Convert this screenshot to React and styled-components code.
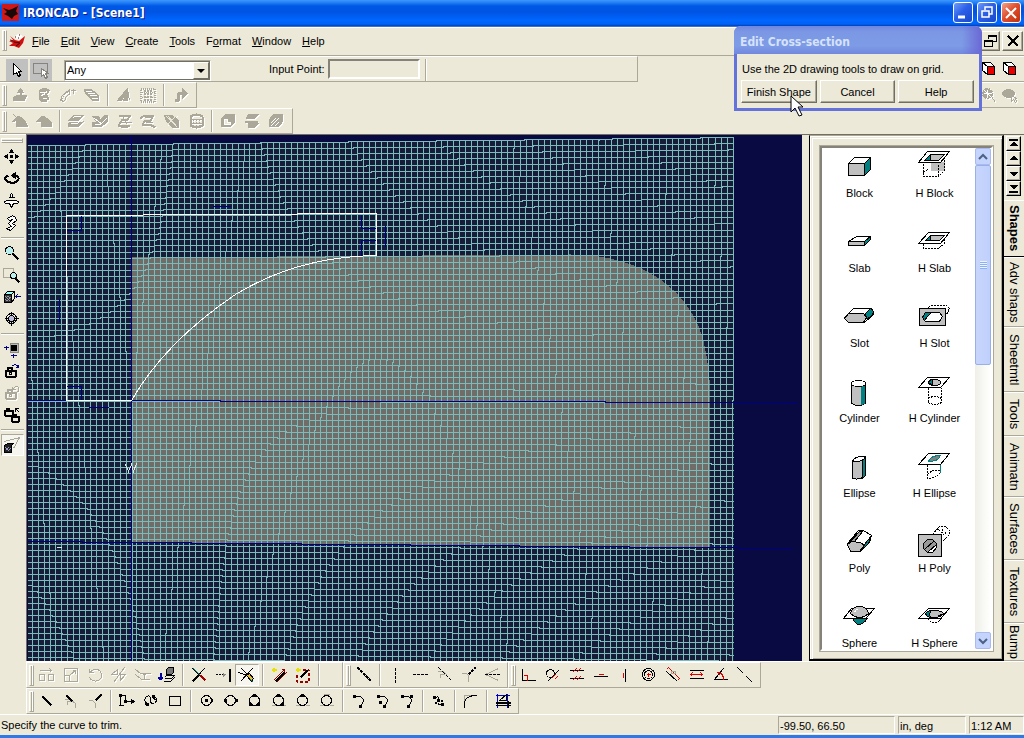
import React from "react";
import styled, { createGlobalStyle, css } from "styled-components";

const face = "#ece9d8";
const shade = "#aca899";
const dark = "#716f64";
const teal = "#008080";
const silver = "#c0c0c0";

const GlobalStyle = createGlobalStyle`
    * {
        box-sizing: border-box;
    }
    body {
        margin: 0;
        background: ${face};
        color: #000;
        font-family: "Liberation Sans", Arial, sans-serif;
        font-size: 11px;
        line-height: 14px;
    }
    button, input, select {
        font: inherit;
        color: inherit;
        margin: 0;
        padding: 0;
        border: 0;
        border-radius: 0;
        background: transparent;
    }
`

/* 18 x 18 toolbar glyphs */
const glyphs = {
    // feature toolbar
    extrude: <><path d="M2 11 5 9H15L13 14H2Z" fill="currentColor"/><path d="M9 10V3" strokeWidth="2"/><path d="M6 6 9 2 12 6Z" fill="currentColor"/></>,
    spin: <><path d="M4 4Q9 0 14 4L11 8Q14 11 12 14Q8 17 4 13Z" fill="currentColor"/><path d="M4 6H10L12 5M6 9 10 7M7 12H11" stroke="#fff"/></>,
    sweep: <><path d="M1 14Q2 7 10 4M5 15Q6 9 11 7M1 14 5 15M11 4H16M14 2V7M10 2V5" strokeWidth="1"/><path d="M2 14Q3 8 10 5" strokeWidth="2" strokeDasharray="1 1"/></>,
    loft: <><path d="M1 3H8L15 9V14H9L2 7Z" fill="currentColor"/><path d="M2 5H8M4 7H11M6 9H13M8 12H14" stroke="#fff"/></>,
    thicken: <><path d="M2 14 12 2V14H8L10 8 6 14Z" fill="currentColor"/><path d="M12 3 14 14"/></>,
    pattern: <><path d="M1 2H15V15H1Z" strokeDasharray="1 1" strokeWidth="2"/><path d="M5 3V14M8 3V14M11 3V14" strokeWidth="2" strokeDasharray="2 1"/><path d="M2 6H15M2 11H15" strokeDasharray="1 1"/></>,
    bend: <><path d="M3 14H7V7H13" strokeWidth="3"/><path d="M11 2 16 7 11 12Z" fill="currentColor"/></>,
    fillet: <><path d="M5 14V8L1 9 6 4Q12 4 16 14Z" fill="currentColor"/><path d="M2 2 15 14"/></>,
    chamfer: <path d="M1 9 6 4H9L16 10V14H6V9Z" fill="currentColor"/>,
    shell: <><path d="M1 8 6 3H16L11 8ZM1 10V14H11L16 9" fill="currentColor"/><path d="M5 6 7 4H13M3 11H10L14 7" stroke="#fff"/></>,
    draft: <><path d="M1 4H7L9 8 13 3H16V9L10 14H1V10H6Z" fill="currentColor"/><path d="M3 6 11 12M8 13 15 6M3 12H8" stroke="#fff"/></>,
    move: <><path d="M3 3H15L12 7H7L3 13H14" strokeWidth="2"/><path d="M4 10H16M7 4 12 12M5 15H12"/></>,
    offset: <><path d="M1 6 5 3H14L11 8H6L3 12H10L16 15" strokeWidth="2"/><path d="M5 5H12M6 10H13"/></>,
    deleteface: <><path d="M1 3H9L15 8V15H9L3 9Z" fill="currentColor"/><path d="M3 13 13 3M5 4 13 14M3 4 14 15" stroke={face}/></>,
    cyl: <><path d="M3 4Q9 0 15 4V13Q9 17 3 13Z" strokeWidth="2"/><path d="M6 6V15M9 6V16M12 6V15M3 7H15M3 11H15" strokeDasharray="2 1"/></>,
    split: <><path d="M2 6 6 2H15V10L11 14H2Z" fill="currentColor"/><path d="M5 7H8V10H11V12H5Z" fill={face} stroke="#fff"/></>,
    mirror: <><path d="M5 2H15L11 6H3ZM5 11H15L11 15H5Z" fill="currentColor"/><path d="M1 9H14" strokeWidth="2"/></>,
    hatch: <><path d="M2 7 6 2H15V9L11 14H2Z" fill="currentColor"/><path d="M3 11 8 6M3 14 11 6M7 14 11 10" stroke="#fff"/></>,
    // left toolbar
    pan: <path d="M8 1 10 4H6ZM8 15 10 12H6ZM1 8 4 6V10ZM15 8 12 6V10ZM7 7H9V9H7Z" fill="#000"/>,
    orbit: <><path d="M5 5Q1 6 2 9Q5 13 11 12Q16 10 15 7Q14 5 11 5" strokeWidth="2"/><path d="M12 2V8L8 5Z" fill="#000"/></>,
    lookat: <><path d="M7 5V2L8 1 9 2V5M5 5H11M4 8H12Q17 9 14 11H10L8 15 6 11H2Q-1 9 4 8Z" fill="#fff"/></>,
    walk: <path d="M4 4 9 1 12 3 13 6 9 9 12 11 7 16 3 14 8 12 5 9 9 5 6 6Z" fill="#fff"/>,
    zoom: <><circle cx="6" cy="6" r="4" fill="#b9eeee"/><path d="M9 9 15 15" strokeWidth="2"/></>,
    zoomwin: <><path d="M0 2H10V11H0Z" stroke={shade}/><circle cx="10" cy="9" r="3" fill="#b9eeee"/><path d="M12 12 16 16" strokeWidth="2"/></>,
    fit: <><path d="M1 6H8V14H1Z" fill="#333"/><path d="M8 14 11 10V3L8 6"/><path d="M1 6 4 3H11L8 6Z" fill="#9ff"/><path d="M2 8 7 13M2 11 4 13M5 8 7 10M2 10 4 8M3 13 7 9" stroke="#99a"/><path d="M12 8H17M14 6 12 8 14 10" stroke="#000080"/></>,
    center: <><circle cx="8" cy="8" r="5"/><path d="M8 1V15M1 8H15"/><circle cx="8" cy="8" r="3" fill="#bbd"/></>,
    front: <><path d="M7 3H15V12H7Z" fill="#bbb" stroke="#888"/><path d="M8 5H13V10H8Z" fill="#000"/><path d="M0 7H5M3 5V9M7 15H13M10 13V17" stroke="#000080"/></>,
    camera: <><path d="M2 8H12V14H2ZM4 8V5H8V8" strokeWidth="2"/><circle cx="7" cy="11" r="1"/><path d="M8 4Q12 0 15 5M12 5H15V2" stroke="#000080"/></>,
    cameraoff: <><path d="M2 8H12V14H2ZM4 8V5H8V8" strokeWidth="2"/><circle cx="7" cy="11" r="1"/><path d="M9 5Q13 0 15 3Q16 7 13 8M9 2V5H12"/></>,
    cameras: <><path d="M1 4H9V9H1ZM3 4V2H5V4M8 10H15V15H8ZM10 10V8H12V10" strokeWidth="2"/><path d="M12 2H15M12 2V5M12 2 16 6"/></>,
    perspective: <><path d="M1 5 16 1 10 12" stroke={shade}/><path d="M1 9 4 7H10L8 9V16H1Z" fill="#222"/><path d="M2 11 6 15M2 14 5 11M5 14 7 12" stroke="#99c"/></>,
    // top-left selection
    arrow: <path d="M5 2V13L8 11 10 15 12 14 10 10H13Z" fill="#fff"/>,
    boxsel: <><path d="M1 2H15V12H1Z" stroke="#85837b"/><path d="M9 7V15L11 13 13 17 15 16 13 12H16Z" fill="#fff" stroke="#85837b"/></>,
    // 2D editing
    move2d: <><path d="M1 8H6V14H1ZM10 8H15V14H10ZM1 4H13M11 2 13 4 11 6"/></>,
    scale2d: <path d="M2 2H15V15H2ZM2 9H7V15M8 8 13 4M10 4H13V7"/>,
    rotate2d: <path d="M3 2V6H7M3 6Q9 0 14 5Q17 11 12 14Q6 16 3 11"/>,
    mirror2d: <path d="M1 8 7 3V8ZM10 8H15L10 14ZM3 16 14 1"/>,
    offset2d: <path d="M1 3 6 7H9M1 8 7 13H15M7 7H16M10 7V13M8 9 10 7 12 9"/>,
    project: <><path d="M8 3 10 1H15V6L13 8H8Z" fill="#777"/><path d="M6 11 8 9H16L13 12H6M5 15H12L16 11" fill={face}/><path d="M2 6V13M0 11 2 13 4 11" stroke="#0000a0" strokeWidth="2"/></>,
    trim: <><path d="M2 2 15 15M14 2 2 15"/><path d="M3 2 10 9" stroke={teal}/><path d="M2 15 8 9" strokeWidth="2"/><path d="M10 9 15 14" stroke="#a00000" strokeWidth="2"/></>,
    extend: <><path d="M1 8H9" strokeDasharray="2 1"/><path d="M8 6 11 8 8 11Z" fill="#888" stroke="none"/><path d="M15 2V15" strokeWidth="2"/></>,
    power: <><path d="M3 2 13 12M2 15 14 2M0 6 9 9"/><path d="M8 9 11 7 15 12 13 15Z" fill="#e8c030"/><path d="M12 13 15 16" stroke={teal}/></>,
    dim: <><path d="M3 14 13 4M6 16 16 6M11 3H14V6" stroke="#900000"/><path d="M5 15 14 6" strokeWidth="2"/><path d="M1 3H6M3 1V5" stroke="#e8e000" strokeWidth="2"/></>,
    constraint: <><path d="M2 8V15H14V3M8 3H14" stroke="#900000" strokeDasharray="3 2" strokeWidth="2"/><path d="M6 11 13 4" strokeWidth="2"/><path d="M1 3H6M3 1V5" stroke="#e8e000" strokeWidth="2"/></>,
    // construction lines
    conline: <path d="M2 1 16 15" strokeDasharray="3 1" strokeWidth="2"/>,
    vline: <path d="M8 1V16" strokeDasharray="3 1"/>,
    hline: <path d="M1 8H17" strokeDasharray="3 1"/>,
    tangent: <><path d="M2 5H8L12 9M5 11V8H9" stroke={shade}/><path d="M3 1 16 14" strokeDasharray="4 1"/></>,
    normal: <><path d="M2 7H7L9 9V15" stroke={shade}/><path d="M9 8 16 1" strokeDasharray="3 1" strokeWidth="2"/></>,
    bisect: <><path d="M15 2 2 8 15 14" stroke={shade}/><path d="M1 8H17" strokeDasharray="3 1"/></>,
    // constraints
    perp: <><path d="M2 2V14H15"/><path d="M3 9H7V14" stroke="#e00000"/></>,
    tanc: <><circle cx="6" cy="7" r="4"/><path d="M3 15 14 4"/><path d="M7 12 11 8M10 13 13 10" stroke="#e00000"/></>,
    parallel: <><path d="M1 4H15M1 12H15"/><path d="M4 6 8 2M8 6 12 2M4 14 8 10M8 14 12 10" stroke="#e00000"/></>,
    horiz: <><path d="M1 10H15"/><path d="M6 8H11" stroke="#e00000"/></>,
    vert: <><path d="M9 2V15"/><path d="M7 6V11" stroke="#e00000"/></>,
    conc: <><circle cx="8" cy="8" r="6"/><circle cx="8" cy="8" r="4"/><path d="M6 8H10M8 6V10" stroke="#e00000"/></>,
    equal: <><path d="M2 5 13 15"/><path d="M2 3 4 1 15 12 13 14" stroke="#e00000"/><path d="M7 5H11V7H7Z" stroke={shade}/></>,
    length: <><path d="M1 4H15M1 12H15"/><path d="M2 8H14M4 6 2 8 4 10M12 6 14 8 12 10" stroke="#e00000"/></>,
    angle: <><path d="M11 2 2 13H15"/><path d="M6 6Q11 7 11 13M5 6 8 9" stroke="#e00000"/></>,
    colin: <path d="M1 1 7 7M10 10 16 16"/>,
    // 2D drawing
    line: <path d="M4 4 13 13" strokeWidth="2"/>,
    linetan: <><path d="M2 7H8L13 11V15M5 12V9H8" stroke={shade}/><path d="M4 3 10 9" strokeWidth="2"/></>,
    linenorm: <><path d="M2 8H6L9 11V15" stroke={shade}/><path d="M9 8 15 2" strokeWidth="2"/></>,
    poly: <><path d="M2 3V13M0 13H5M2 3H7V9H15"/><path d="M1 2H3V4H1ZM6 8H8V10H6ZM13 7 16 9 13 11Z" fill="#000"/></>,
    spline: <><path d="M5 11Q0 8 4 4Q8 2 8 7Q8 13 12 11Q16 7 12 4"/><path d="M3 9Q2 13 6 12M9 5Q12 5 13 8"/><path d="M4 11H6V13H4ZM10 3H12V5H10Z" fill="#000"/></>,
    rect: <path d="M3 4H14V13H3Z"/>,
    circle1: <><circle cx="8" cy="8" r="5"/><path d="M7 7H9V9H7ZM13 7H14V9H13Z" fill="#000"/></>,
    circle2: <><circle cx="8" cy="8" r="5"/><path d="M2 7H4V9H2ZM13 7H15V9H13Z" fill="#000"/></>,
    circle3: <><circle cx="8" cy="8" r="5"/><path d="M7 2H9V4H7ZM3 11H5V13H3ZM11 11H13V13H11Z" fill="#000"/></>,
    circle4: <><path d="M1 13H15" stroke={shade}/><circle cx="8" cy="8" r="5"/><path d="M7 2H9V4H7ZM11 11H13V13H11Z" fill="#000"/></>,
    circle5: <><path d="M1 13H5M11 13H15" stroke={shade}/><circle cx="8" cy="8" r="5"/><path d="M7 2H9V4H7Z" fill="#000"/></>,
    circle6: <><path d="M1 13H5M11 13H15M5 2H11" stroke={shade}/><circle cx="8" cy="8" r="5"/></>,
    arc1: <><path d="M4 4Q13 3 13 9L10 14"/><path d="M3 3H5V5H3ZM9 13H11V15H9Z" fill="#000"/></>,
    arc2: <><path d="M4 4Q13 3 13 9L10 14"/><path d="M3 3H5V5H3ZM9 13H11V15H9ZM5 9H7V11H5Z" fill="#000"/></>,
    arc3: <><path d="M4 4Q13 3 13 9L10 14"/><path d="M3 3H5V5H3ZM9 13H11V15H9ZM12 3H14V5H12Z" fill="#000"/></>,
    bspline: <><path d="M4 5Q10 3 8 8Q6 13 12 12"/><path d="M3 4H5V6H3ZM7 7H9V9H7ZM11 11H13V13H11ZM5 10H6V11H5ZM11 8H12V9H11Z" fill="#000"/></>,
    round: <><path d="M2 15V3H14" stroke={shade}/><path d="M2 15V10Q3 3 14 3"/></>,
    project2: <><path d="M1 3H15M3 1V15M13 1V15" stroke="#0000d0"/><path d="M5 8 12 2V8Z"/><path d="M1 10H16" strokeWidth="2"/><path d="M1 13H16M14 8V15"/></>,
    // scene toolbar, right edge
    cube: <><path d="M2 2H10L14 6V14H7L2 10Z" fill="#fff"/><path d="M7 6H14V14H7Z" fill="#e80000"/><path d="M2 2 7 6"/></>,
    render: <><circle cx="7" cy="7" r="5" fill="currentColor" strokeDasharray="2 1"/><path d="M7 3V11M3 7H11M4 4 10 10M10 10 15 15" stroke="#fff"/><path d="M11 10 15 16"/></>,
    pick: <><ellipse cx="7" cy="7" rx="6" ry="4" fill="currentColor"/><path d="M10 9V15L12 13 14 16 15 15 14 12H15Z"/></>,
};

const Svg = styled.svg`
    display: block;
    width: 18px;
    height: 18px;
    color: ${(p) => (p.$off ? shade : "#000")};
    fill: none;
    stroke: currentColor;
    stroke-linejoin: bevel;
    shape-rendering: crispEdges;
    filter: ${(p) => (p.$off ? "drop-shadow(1px 1px 0 #fff)" : "none")};
`

const Glyph = ({ name, off }) => (
    <Svg viewBox="0 0 18 18" $off={off} aria-hidden="true">
        <g transform="translate(0.5 0.5)">{glyphs[name]}</g>
    </Svg>
);

const Page = styled.div`
    display: flex;
    flex-direction: column;
    height: 100vh;
    overflow: hidden;
    border-bottom: 3px solid #2f78e8;
`

const TitleBar = styled.header`
    display: flex;
    align-items: center;
    flex: none;
    height: 27px;
    padding: 0 3px 2px 2px;
    gap: 4px;
    background: linear-gradient(#3f96fb 0, #2a86f8 2px, #0058e6 6px, #0054e3 12px, #0066ff 20px, #0062f6 24px, #003fbb 26px, #8da2c4 27px);
    h1 {
        flex: 1;
        margin: 0;
        color: #fff;
        font-family: "DejaVu Sans Condensed", "DejaVu Sans", sans-serif;
        font-size: 12px;
        text-shadow: 1px 1px 0 #0a1883;
    }
`

const CaptionButton = styled.button`
    width: 20px;
    height: 21px;
    border: 1px solid #fff;
    border-radius: 3px;
    background: ${(p) => (p.$close ? "linear-gradient(135deg, #f0a48c, #e05030 45%, #c03008)" : "linear-gradient(135deg, #6f9cf8, #2c60e8 45%, #1848c8)")};
    svg {
        display: block;
        width: 18px;
        height: 19px;
        fill: none;
        stroke: #fff;
    }
`

const Logo = styled.svg`
    display: block;
    width: 17px;
    height: 17px;
`

const MenuBar = styled.nav`
    display: flex;
    align-items: center;
    flex: none;
    gap: 1px;
    height: 29px;
    padding: 0 0 2px 2px;
    border-top: 1px solid #fff;
    border-bottom: 1px solid ${shade};
    ${Logo} {
        margin: 0 0 0 1px;
    }
`

const MenuButton = styled.button`
    height: 20px;
    padding: 0 5px;
`

const Grip = styled.span`
    flex: none;
    width: ${(p) => (p.$flat ? "22px" : "5px")};
    height: ${(p) => (p.$flat ? "5px" : "21px")};
    border: 1px solid;
    border-color: #fff ${shade} ${shade} #fff;
    ${(p) => p.$flat ? css`background: linear-gradient(${face} 1px, ${shade} 1px, ${shade} 2px, #fff 2px);` : css`background: linear-gradient(90deg, ${face} 1px, ${shade} 1px, ${shade} 2px, #fff 2px);`}
`

const Spacer = styled.div`
    flex: 1;
`

const MdiButton = styled.button`
    width: 21px;
    height: 20px;
    margin-right: 1px;
    border: 1px solid;
    border-color: #fff ${dark} ${dark} #fff;
    box-shadow: inset -1px -1px 0 ${shade};
    svg {
        display: block;
        margin: 0 auto;
        shape-rendering: crispEdges;
    }
`

const Row = styled.div`
    display: flex;
    flex: none;
    height: 26px;
`

const Bar = styled.div`
    display: flex;
    align-items: center;
    padding: 0 4px 0 2px;
    border-top: 1px solid #fff;
    border-right: 1px solid ${shade};
    border-bottom: 1px solid ${shade};
    ${Grip} {
        margin-right: 1px;
    }
`

const BottomBar = styled(Bar)`
    padding: 0 3px 0 2px;
    border-left: 1px solid #fff;
`

const ToolButton = styled.button`
    display: flex;
    align-items: center;
    justify-content: center;
    flex: none;
    width: 24px;
    height: 22px;
    ${(p) => p.$on && css`
        border: 1px solid;
        border-color: ${shade} #fff #fff ${shade};
        background: #f6f5ee;
    `}
`

const Divider = styled.span`
    flex: none;
    width: 2px;
    height: 22px;
    margin: 0 3px;
    border-left: 1px solid ${shade};
    border-right: 1px solid #fff;
`

const Blank = styled.span`
    flex: none;
    width: 16px;
`

const tools = (names, off = [], on) => names.split(" ").map((n, i) =>
    n === "|" ? <Divider key={i} /> : (
        <ToolButton key={i} aria-label={n} $on={n === on}>
            <Glyph name={n} off={off === true || off.includes(n)} />
        </ToolButton>
    )
);

const SelectionBar = styled(Bar)`
    flex: 0 1 638px;
    padding: 2px 0 0 6px;
`

const SelectButton = styled(ToolButton)`
    width: 22px;
    margin-right: 2px;
    background: ${silver};
`

const Combo = styled.span`
    position: relative;
    width: 147px;
    height: 21px;
    margin-left: 10px;
    border: 1px solid;
    border-color: ${shade} #fff #fff ${shade};
    select {
        appearance: none;
        width: 100%;
        height: 100%;
        padding-left: 1px;
        border: 1px solid ${dark};
        background: #fff;
    }
    svg {
        position: absolute;
        top: 1px;
        right: 1px;
        width: 16px;
        height: 17px;
        background: ${face};
        border: 1px solid;
        border-color: #fff ${dark} ${dark} #fff;
        pointer-events: none;
    }
`

const PointLabel = styled.label`
    display: flex;
    align-items: center;
    gap: 3px;
    margin: 0 2px 2px 58px;
    input {
        width: 92px;
        height: 20px;
        border: 2px solid;
        border-color: #85827a #fff #fff #85827a;
    }
`

const RightBar = styled(Bar)`
    width: 60px;
    padding: 0 4px 0 14px;
    border-right: 0;
    ${ToolButton} {
        width: 21px;
    }
`

const Middle = styled.div`
    display: flex;
    flex: 1;
    min-height: 0;
`

const SideBar = styled.aside`
    display: flex;
    flex-direction: column;
    align-items: center;
    flex: none;
    width: 26px;
    padding: 3px 2px 0 0;
    border-top: 1px solid #fff;
    ${Grip} {
        margin-bottom: 3px;
    }
    ${ToolButton} {
        width: 23px;
        height: 22px;
    }
    ${Divider} {
        width: 23px;
        height: 2px;
        margin: 3px 0;
        border: 0;
        border-top: 1px solid ${shade};
        border-bottom: 1px solid #fff;
    }
`

const Work = styled.div`
    display: flex;
    flex-direction: column;
    flex: 1;
    min-width: 0;
`

const Stage = styled.div`
    display: flex;
    flex: 1;
    min-height: 0;
    border-top: 1px solid ${dark};
    border-bottom: 1px solid #fff;
`

const Scene = styled.main`
    display: flex;
    flex: 1;
    min-width: 0;
    overflow: hidden;
    border-left: 1px solid ${dark};
    background: #0a0a42;
    svg {
        flex: 1;
        min-width: 0;
        display: block;
        height: 100%;
        fill: none;
        shape-rendering: crispEdges;
    }
`

const gridRight = 706;
const gridBottom = 527;

const columnX = (n) => 104 + 5.9 * n + 0.0012 * n * n;
const rowLeft = (n) => 266 + 5.95 * n;
const rowRight = (n) => 267 + 6.16 * n;

// nearly straight line broken into whole-pixel runs, the way the modeller rasterises it
const stairs = (from, to, a, b, upright) => {
    let level = Math.round(a);
    let d = upright ? `M${level} ${from}` : `M${from} ${level}`;
    for (let t = from; t <= to; t++) {
        const next = Math.round(a + ((b - a) * (t - from)) / (to - from));
        if (next !== level) {
            d += upright ? `V${t}H${next}` : `H${t}V${next}`;
            level = next;
        }
    }
    return d + (upright ? `V${to}` : `H${to}`);
};

const columns = Array.from({ length: 118 }, (_, i) => i - 17).map((n) => {
    const x = columnX(n);
    return stairs(Math.round(10 - x * 0.0113), gridBottom, x, x - (n > 0 ? 1 : -1), true);
});
const rows = Array.from({ length: 87 }, (_, i) => i - 43).map((n) => stairs(0, gridRight, rowLeft(n), rowRight(n)));

const Drawing = () => (
    <svg role="img" aria-label="Cross-section grid">
        <g transform="translate(0.5 0.5)">
            <path d="M0 10 706 2V527H0Z" fill="#171c38" />
            <path d="M104 122 540 119C620 118 680 160 682 244V412L104 407Z" fill="#706d68" />
            <path d="M633 135Q676 168 682 240" stroke="#171a38" />
            <path d={columns.join("")} stroke="#7abcbc" />
            <path d={rows.join("")} stroke="#7abcbc" />
            <g stroke="#000084">
                <path d="M104 0V527" />
                <path d={stairs(0, 770, 265, 267)} />
                <path d={stairs(0, 765, 406, 413)} />
                <path d="M54 80V95H39M39 251H54V265M32 163V186M61 272H81M334 79V93H350M350 105H334V120M358 90V111M185 71H203" />
            </g>
            <path d="M39 80 349 78V120Q270 121 208 159Q138 206 104 265H39Z" stroke="#fff" />
            <path d="M98 329 101 336 104 329 106 336 109 328M29 412H34" stroke="#d8e8e8" />
        </g>
    </svg>
);

const Catalog = styled.section`
    display: flex;
    flex: none;
    width: 222px;
    border-left: 7px solid ${face};
`

const CatalogFrame = styled.div`
    flex: 1;
    min-width: 0;
    display: flex;
    padding: 10px 9px 8px 10px;
    border: solid #000;
    border-width: 1px 2px 2px 1px;
    border-top-color: ${shade};
    box-shadow: inset 1px 1px 0 #fff, inset 2px 2px 0 ${face}, inset 3px 3px 0 #fff, inset -1px -1px 0 ${shade};
`

const ShapeList = styled.div`
    display: flex;
    flex: 1;
    min-width: 0;
    overflow: hidden;
    border: 2px solid;
    border-color: #85827a #fff #fff #85827a;
    outline: 1px solid ${shade};
    background: #fff;
`

const ShapeGrid = styled.ul`
    display: grid;
    grid-template-columns: 75px 75px;
    grid-auto-rows: 75px;
    flex: 1;
    margin: 0;
    padding: 2px 0 0;
    list-style: none;
`

const ShapeButton = styled.button`
    display: flex;
    flex-direction: column;
    align-items: center;
    gap: 4px;
    width: 75px;
    svg {
        display: block;
        width: 33px;
        height: 32px;
        fill: none;
        stroke: #000;
        shape-rendering: crispEdges;
    }
`

const shapes = [
    ["Block", <><path d="M5 13H21V25H5Z" fill={silver} /><path d="M5 13 11 7H27L21 13Z" fill="#fff" /><path d="M21 13 27 7V19L21 25Z" fill={teal} /></>],
    ["H Block", <><path d="M12 11H26V20H12Z" fill={silver} stroke="none" /><path d="M5 13V26H20L26 20V6M5 22 11 18M20 14V26" strokeDasharray="2 1" /><path d="M0 12 9 1H31L22 12Z" fill="#fff" /><path d="M6 10 12 4H26L20 10Z" fill={silver} /><path d="M6 10 12 4V10Z" fill={teal} /></>],
    ["Slab", <><path d="M5 16 13 11H27L21 16Z" fill="#fff" /><path d="M5 16H21V20H5Z" fill={silver} /><path d="M21 16 27 11V14L21 20Z" fill={teal} /></>],
    ["H Slab", <><path d="M5 18V23H20L26 18V12" strokeDasharray="2 1" /><path d="M0 18 10 7H31L22 18Z" fill="#fff" /><path d="M7 15 12 10H26L21 15Z" fill={silver} /><path d="M7 15 12 10V15Z" fill={teal} /></>],
    ["Slot", <><path d="M5 13 10 8H28L30 11V14L21 22H5L1 17Z" fill="#fff" /><path d="M5 13H20L23 17 20 22H5L1 18Z" fill={silver} /><path d="M22 13 27 8 30 11 28 16 23 18Z" fill={teal} /></>],
    ["H Slot", <><path d="M10 7 13 5H28L31 8 28 14" strokeDasharray="2 1" /><path d="M1 8H27V25H1Z" fill={silver} /><path d="M7 12H21L24 16 21 21H7L4 17Z" fill="#fff" /><path d="M7 12H13L9 16 6 20 4 17Z" fill={teal} /></>],
    ["Cylinder", <><path d="M8 8V28Q15 32 22 28V8Z" fill={silver} /><path d="M17 10H21V28L17 30Z" fill={teal} stroke="none" /><ellipse cx="15" cy="8" rx="7" ry="3" fill="#fff" /><path d="M22 8V28" /></>],
    ["H Cylinder", <><path d="M10 12V27Q16 31 23 27V12M10 23Q16 19 23 23" strokeDasharray="2 1" /><path d="M0 12 9 2H31L22 12Z" fill="#fff" /><ellipse cx="16" cy="7" rx="6" ry="3" fill={silver} /><path d="M10 7Q11 4 14 4V10Z" fill={teal} /></>],
    ["Ellipse", <><path d="M9 11V28Q16 30 22 25V6Z" fill={silver} /><path d="M19 9 22 6V25L19 28Z" fill={teal} /><path d="M9 11Q11 5 22 6Q20 12 9 11Z" fill="#fff" /></>],
    ["H Ellipse", <><path d="M9 14V28Q18 28 22 22V14M9 24Q15 18 22 20" strokeDasharray="2 1" /><path d="M22 14V22" stroke={teal} /><path d="M0 14 10 3H31L22 14Z" fill="#fff" /><path d="M10 11Q12 5 22 5Q20 11 10 11Z" fill="#808080" stroke={teal} /></>],
    ["Poly", <><path d="M4 18 15 5 20 5 28 10 26 17 17 26H7Z" fill="#fff" /><path d="M6 17 16 6 20 5 11 16Z" fill="#999" /><path d="M4 19 8 16 17 17 21 20 16 26H7Z" fill={silver} /><path d="M21 19 28 10 25 18 18 25Z" fill={teal} /></>],
    ["H Poly", <><path d="M14 9 21 1H27L31 5V9L24 16M20 4 26 10M24 3V7M27 6V9" strokeDasharray="2 1" /><path d="M0 9H23V31H0Z" fill={silver} /><path d="M9 14H14L18 18V22L14 27H9L5 23V18Z" fill="#999" /><path d="M6 24 16 15M9 27 18 19V22L14 27Z" fill="#fff" /></>],
    ["Sphere", <><path d="M9 18Q15 30 24 18Z" fill={teal} /><path d="M0 18 8 8H31L22 18Z" fill="#fff" /><path d="M7 13Q9 6 16 6T25 13Q16 21 7 13Z" fill={silver} /><path d="M11 12Q12 9 15 8" stroke="#fff" /></>],
    ["H Sphere", <><path d="M9 18Q16 26 23 18" strokeDasharray="2 1" /><path d="M0 18 10 8H31L22 18Z" fill="#fff" /><path d="M7 13Q9 10 16 10T25 13Q22 17 16 17T7 13Z" fill={silver} /><path d="M7 13Q9 10 13 10Q10 13 12 17Q8 16 7 13ZM20 15 24 14" fill={teal} /></>],
];

const ScrollTrack = styled.div`
    display: flex;
    flex-direction: column;
    flex: none;
    width: 16px;
    background: linear-gradient(90deg, #f0f0e8, #fff);
`

const ScrollButton = styled.button`
    flex: none;
    height: 17px;
    border: 1px solid #a8baf0;
    border-radius: 2px;
    background: #c4d4fc;
    svg {
        display: block;
        margin: 0 auto;
        fill: none;
        stroke: #4d6185;
        stroke-width: 2;
    }
`

const ScrollThumb = styled.div`
    display: flex;
    align-items: center;
    justify-content: center;
    flex: 0 0 40%;
    border: 1px solid #98b0e8;
    border-radius: 2px;
    background: linear-gradient(90deg, #c8d6fb, #bfd0fd);
    &::after {
        content: "";
        width: 7px;
        height: 8px;
        background: repeating-linear-gradient(#eef4fe 0, #eef4fe 1px, #8cb0f8 1px, #8cb0f8 2px);
    }
`

const TabColumn = styled.div`
    display: flex;
    flex-direction: column;
    flex: none;
    width: 20px;
    overflow: hidden;
    padding-top: 1px;
`

const TabNav = styled.button`
    flex: none;
    width: 15px;
    height: 15px;
    margin-left: 2px;
    border: 1px solid;
    border-color: #fff #000 #000 #fff;
    box-shadow: inset -1px -1px 0 ${shade};
    svg {
        display: block;
        width: 13px;
        height: 13px;
        shape-rendering: crispEdges;
    }
`

const Tab = styled.button`
    flex: none;
    width: 20px;
    height: ${(p) => p.$size}px;
    border-top: 1px solid #fff;
    border-bottom: 1px solid ${shade};
    font-size: 13px;
    font-weight: ${(p) => (p.$active ? "bold" : "normal")};
    writing-mode: vertical-rl;
    text-align: center;
    ${(p) => p.$active && css`
        margin-top: 4px;
        background: ${face};
        border-bottom-color: #000;
    `}
`

const tabs = [["Shapes", 57], ["Adv shaps", 70], ["Sheetmtl", 65], ["Tools", 44], ["Animatn", 61], ["Surfaces", 63], ["Textures", 63], ["Bump", 38]];

const StatusBar = styled.footer`
    display: flex;
    align-items: center;
    flex: none;
    gap: 3px;
    height: 21px;
    padding-left: 1px;
    border-top: 1px solid #fff;
`

const StatusCell = styled.span`
    width: ${(p) => p.$width}px;
    height: 18px;
    padding: 2px 1px 0;
    border: 1px solid;
    border-color: ${shade} #fff #fff ${shade};
    white-space: nowrap;
`

const Dialog = styled.div`
    position: absolute;
    top: 26px;
    right: 42px;
    width: 248px;
    border: 3px solid #6473dc;
    border-top: 0;
    border-radius: 7px 7px 0 0;
    background: ${face};
    h2 {
        margin: 0 -3px;
        height: 28px;
        padding: 9px 6px 0;
        border-radius: 7px 7px 0 0;
        background: linear-gradient(90deg, transparent 92%, #6a68d4), linear-gradient(#6f86e0, #7c98e4 6px, #7d9be6 20px, #7288de);
        color: #d6e2fa;
        font-family: "DejaVu Sans Condensed", "DejaVu Sans", sans-serif;
        font-size: 12px;
    }
    p {
        margin: 0;
        padding: 8px 5px 4px;
    }
`

const DialogButtons = styled.div`
    display: flex;
    gap: 3px;
    padding: 0 5px 5px 4px;
    button {
        flex: 1;
        height: 23px;
        border: 1px solid;
        border-color: #fff ${dark} ${dark} #fff;
        box-shadow: inset -1px -1px 0 ${shade};
    }
`

const Pointer = styled.svg`
    position: absolute;
    top: 95px;
    right: 220px;
    width: 14px;
    height: 23px;
`

const Accel = ({ text, at }) => (
    <>{text.slice(0, at)}<u>{text[at]}</u>{text.slice(at + 1)}</>
);

const menus = [["File", 0], ["Edit", 0], ["View", 0], ["Create", 0], ["Tools", 0], ["Format", 1], ["Window", 0], ["Help", 0]];

const navMarks = ["M2 2H11V4H2ZM6 5H7L11 9H2Z", "M6 4H7L11 8H2Z", "M2 5H11L7 9H6Z", "M2 3H11L7 7H6ZM2 9H11V11H2Z"];

const App = () => {
    return (
        <>
            <GlobalStyle />
            <Page>
                <TitleBar>
                    <Logo viewBox="0 0 17 17">
                        <path d="M0 0H17V17H0Z" fill="#d01818" />
                        <path d="M1 4 7 6 10 5 16 2 14 7 16 10 12 12 10 15 6 12 2 10 5 8Z" fill="#1a0808" />
                    </Logo>
                    <h1>IRONCAD - [Scene1]</h1>
                    <CaptionButton aria-label="Minimize"><svg viewBox="0 0 18 19"><path d="M4 14H11" strokeWidth="3" /></svg></CaptionButton>
                    <CaptionButton aria-label="Restore"><svg viewBox="0 0 18 19"><path d="M7 7V4H14V11H11M4 8H11V14H4Z" strokeWidth="1.500" /></svg></CaptionButton>
                    <CaptionButton aria-label="Close" $close><svg viewBox="0 0 18 19"><path d="M4 5 14 15M14 5 4 15" strokeWidth="2" /></svg></CaptionButton>
                </TitleBar>
                <MenuBar>
                    <Grip />
                    <Logo viewBox="0 0 17 17">
                        <path d="M1 4 6 8 10 9 16 4 14 11 10 16 5 14 0 14 4 11 0 9 5 9Z" fill="#d01010" />
                        <path d="M5 5 9 2 12 3 14 5 10 8Z" fill="#fff" />
                        <path d="M5 10 11 11 7 14M1 8 5 9M6 5H7M10 3H11M9 6H10" stroke="#500" fill="none" />
                    </Logo>
                    {menus.map(([text, at]) => (
                        <MenuButton key={text}><Accel text={text} at={at} /></MenuButton>
                    ))}
                    <Spacer />
                    <MdiButton aria-label="Restore window"><svg width="18" height="18" fill="none" stroke="#000"><path d="M7.500 7V4.500H15.500V9.500H12M3.500 9.500H11.500V14.500H3.500Z" /><path d="M7 4H16M3 9H12" strokeWidth="2" /></svg></MdiButton>
                    <MdiButton aria-label="Close window"><svg width="18" height="18" fill="none" stroke="#000" strokeWidth="2"><path d="M4 4 14 14M14 4 4 14" /></svg></MdiButton>
                </MenuBar>
                <Row>
                    <SelectionBar>
                        <SelectButton aria-label="Select"><Glyph name="arrow" /></SelectButton>
                        <SelectButton aria-label="Box select"><Glyph name="boxsel" /></SelectButton>
                        <Combo>
                            <select aria-label="Selection filter"><option>Any</option></select>
                            <svg viewBox="0 0 14 15"><path d="M3 6H11L7 10Z" /></svg>
                        </Combo>
                        <PointLabel>Input Point:<input type="text" /></PointLabel>
                        <Divider />
                    </SelectionBar>
                    <Spacer />
                    <RightBar>
                        <ToolButton aria-label="Shading"><Glyph name="cube" /></ToolButton>
                        <ToolButton aria-label="Wireframe"><Glyph name="cube" /></ToolButton>
                    </RightBar>
                </Row>
                <Row>
                    <Bar><Grip />{tools("extrude spin sweep loft | thicken pattern | bend", true)}</Bar>
                    <Spacer />
                    <RightBar>{tools("render pick", true)}</RightBar>
                </Row>
                <Row>
                    <Bar><Grip />{tools("fillet chamfer | shell draft move offset deleteface cyl | split mirror hatch", true)}</Bar>
                </Row>
                <Middle>
                    <SideBar>
                        <Grip $flat />
                        {tools("pan orbit lookat walk | zoom zoomwin fit center | front camera cameraoff cameras | perspective", ["cameraoff"], "perspective")}
                    </SideBar>
                    <Work>
                        <Stage>
                            <Scene><Drawing /></Scene>
                            <Catalog>
                                <CatalogFrame>
                                    <ShapeList>
                                        <ShapeGrid>
                                            {shapes.map(([label, art]) => (
                                                <li key={label}>
                                                    <ShapeButton>
                                                        <svg viewBox="0 0 33 32" aria-hidden="true"><g transform="translate(0.5 0.5)">{art}</g></svg>
                                                        {label}
                                                    </ShapeButton>
                                                </li>
                                            ))}
                                        </ShapeGrid>
                                        <ScrollTrack>
                                            <ScrollButton aria-label="Scroll up"><svg width="10" height="10"><path d="M1 7 5 3 9 7" /></svg></ScrollButton>
                                            <ScrollThumb />
                                            <Spacer />
                                            <ScrollButton aria-label="Scroll down"><svg width="10" height="10"><path d="M1 3 5 7 9 3" /></svg></ScrollButton>
                                        </ScrollTrack>
                                    </ShapeList>
                                </CatalogFrame>
                                <TabColumn>
                                    {navMarks.map((d) => (
                                        <TabNav key={d} aria-label="Scroll tabs"><svg viewBox="0 0 13 13"><path d={d} /></svg></TabNav>
                                    ))}
                                    {tabs.map(([text, size], i) => (
                                        <Tab key={text} $size={size} $active={i === 0}>{text}</Tab>
                                    ))}
                                </TabColumn>
                            </Catalog>
                        </Stage>
                        <Row>
                            <BottomBar>
                                <Grip />
                                {tools("move2d scale2d rotate2d mirror2d offset2d project | trim extend power | dim constraint |", ["move2d", "scale2d", "rotate2d", "mirror2d", "offset2d"], "power")}
                                <Blank />
                            </BottomBar>
                            <BottomBar><Grip />{tools("conline | vline hline tangent normal bisect")}</BottomBar>
                            <BottomBar><Grip />{tools("perp tanc parallel horiz vert conc equal length angle colin")}</BottomBar>
                        </Row>
                        <Row>
                            <BottomBar>
                                <Grip />
                                {tools("line linetan linenorm | poly spline rect | circle1 circle2 circle3 circle4 circle5 circle6 | arc1 arc2 arc3 | bspline | round | project2")}
                            </BottomBar>
                        </Row>
                    </Work>
                </Middle>
                <StatusBar>
                    <span>Specify the curve to trim.</span>
                    <Spacer />
                    <StatusCell $width={117}>-99.50, 66.50</StatusCell>
                    <StatusCell $width={68}>in, deg</StatusCell>
                    <StatusCell $width={55}>1:12 AM</StatusCell>
                </StatusBar>
            </Page>
            <Dialog role="dialog" aria-labelledby="dialog-title">
                <h2 id="dialog-title">Edit Cross-section</h2>
                <p>Use the 2D drawing tools to draw on grid.</p>
                <DialogButtons>
                    <button>Finish Shape</button>
                    <button>Cancel</button>
                    <button>Help</button>
                </DialogButtons>
            </Dialog>
            <Pointer viewBox="0 0 14 23"><path d="M1 1V17L5 13 9 21 12 20 8 12H13Z" fill="#fff" stroke="#000" /></Pointer>
        </>
    );
}

export default App;
